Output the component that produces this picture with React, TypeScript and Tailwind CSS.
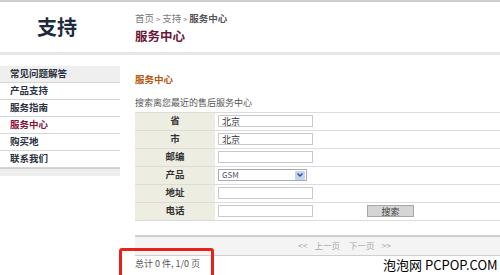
const menu = ["常见问题解答", "产品支持", "服务指南", "服务中心", "购买地", "联系我们"];

const fields = [
  { label: "省", kind: "input", value: "北京" },
  { label: "市", kind: "input", value: "北京" },
  { label: "邮编", kind: "input", value: "" },
  { label: "产品", kind: "select", value: "GSM" },
  { label: "地址", kind: "input", value: "" },
  { label: "电话", kind: "button", value: "" },
];

function Field({ kind, value }: { kind: string; value: string }) {
  if (kind === "select") {
    return (
      <div className="flex h-[12px] w-[89px] items-center justify-between border border-[#a5acb5] bg-white pl-[3px] pr-[1px]">
        <span className="text-[8px] leading-none text-[#555]">{value}</span>
        <span className="flex h-[9px] w-[10px] items-center justify-center rounded-[1px] bg-[#c4d5f2]">
          <svg width="6" height="4" viewBox="0 0 6 4">
            <path d="M0.5 0.5 L3 3 L5.5 0.5" fill="none" stroke="#2b4a8c" strokeWidth="1.3" />
          </svg>
        </span>
      </div>
    );
  }
  return (
    <div className="flex h-[12px] w-[95px] items-center border border-[#c9c9c9] bg-white pl-[3px] text-[9px] leading-none text-[#333]">
      {value}
    </div>
  );
}

export default function App() {
  return (
    <div className="relative h-[275px] w-[500px] overflow-hidden bg-white font-['Noto_Sans_CJK_SC',sans-serif]">
      {/* header */}
      <div className="flex h-[55px] items-center border-t-2 border-b-[3px] border-t-[#cdcdcd] border-b-[#e6e6e6]">
        <div className="w-[120px] pl-[37px] text-[20px] font-bold leading-none text-[#1d2a3f]">支持</div>
        <div className="ml-[15px] flex flex-col gap-[6px] pt-[2px]">
          <div className="text-[9.5px] leading-none text-[#7a7a7a]">
            首页 <span className="text-[7px]">&gt;</span> 支持 <span className="text-[7px]">&gt;</span>{" "}
            <span className="font-bold text-[#555]">服务中心</span>
          </div>
          <div className="text-[12.5px] font-bold leading-none text-[#6a1838]">服务中心</div>
        </div>
      </div>

      <div className="flex">
        {/* sidebar */}
        <div className="w-[120px] pt-[11px]">
          {menu.map((m, i) => (
            <div
              key={m}
              className={`flex h-[17px] items-center border-b border-[#d6d6d6] pl-[10px] text-[9.5px] font-bold leading-none ${
                i === 0 ? "bg-[#efefef]" : "bg-white"
              } ${m === "服务中心" ? "text-[#8a0f3c]" : "text-[#2a3140]"}`}
            >
              {m}
            </div>
          ))}
          <div className="h-[8px] border-t border-[#cfcfcf] bg-[#eeeeee]" />
        </div>

        {/* content */}
        <div className="ml-[15px] flex-1 pt-[20px]">
          <div className="text-[9.5px] font-bold leading-none text-[#b5560c]">服务中心</div>
          <div className="mt-[13px] text-[9px] leading-none text-[#555]">搜索离您最近的售后服务中心</div>
          <div className="mt-[5px] border-t border-[#dcdcdc]">
            {fields.map((f) => (
              <div key={f.label} className="flex h-[18px] items-center border-b border-[#dcdcdc]">
                <div className="flex h-full w-[80px] items-center justify-center bg-[#eeede2] text-[9.5px] font-bold leading-none text-[#333]">
                  {f.label}
                </div>
                <div className="flex items-center pl-[3px]">
                  {f.kind === "button" ? (
                    <>
                      <Field kind="input" value="" />
                      <div className="ml-[54px] flex h-[12px] w-[47px] items-center justify-center border border-[#a8a8a8] bg-[#d5d5d5] text-[9px] leading-none text-[#444]">
                        搜索
                      </div>
                    </>
                  ) : (
                    <Field kind={f.kind} value={f.value} />
                  )}
                </div>
              </div>
            ))}
          </div>

          <div className="mt-[14px] flex h-[21px] items-center border-t-2 border-b border-[#cfcfcf] bg-[#f4f4f4] pl-[163px] text-[8.5px] leading-none text-[#aaaaaa]">
            <span>&lt;&lt;</span>
            <span className="ml-[7px]">上一页</span>
            <span className="ml-[9px]">下一页</span>
            <span className="ml-[7px]">&gt;&gt;</span>
          </div>
          <div className="mt-[3px] text-[9px] leading-none text-[#555]">总计 0 件, 1/0 页</div>
        </div>
      </div>

      {/* annotation overlay */}
      <div className="absolute left-[119px] top-[248px] h-[32px] w-[95px] rounded-[3px] border-[3px] border-[#e8211b]" />
      <div className="absolute left-[383px] top-[258px] text-[13px] leading-none text-black">泡泡网 PCPOP.COM</div>
    </div>
  );
}
